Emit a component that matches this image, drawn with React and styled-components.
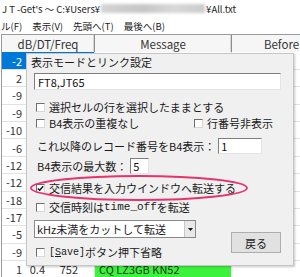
import React from "react";
import styled, { createGlobalStyle } from "styled-components";

const GlobalStyle = createGlobalStyle`
    html, body {
        margin: 0;
        padding: 0;
        background: #fff;
        overflow: hidden;
    }
    body {
        font-family: "Noto Sans CJK JP", "Noto Sans", sans-serif;
        color: #1e1e1e;
    }
`;

const rows = [
    { db: "-2", dt: "0.1", freq: "1520", msg: "JA1XYZ JH2ABC PM95", selected: true },
    { db: "2", dt: "0.3", freq: "984", msg: "CQ JR3QHB PM74" },
    { db: "-9", dt: "0.2", freq: "1240", msg: "JE1CKA RA3DNC R-12" },
    { db: "-9", dt: "0.1", freq: "633", msg: "CQ DX UA9OV MO06" },
    { db: "-10", dt: "0.5", freq: "1811", msg: "JA7QVI BG4GOV OM91" },
    { db: "-6", dt: "0.2", freq: "2104", msg: "CQ BH1MBR OM89" },
    { db: "-12", dt: "0.3", freq: "447", msg: "JH1GBZ YB2ECG 73" },
    { db: "-12", dt: "0.1", freq: "1663", msg: "CQ VK4CT QG62" },
    { db: "-18", dt: "0.6", freq: "2390", msg: "JA4FHE DU1IVT RR73" },
    { db: "-17", dt: "0.2", freq: "1092", msg: "CQ HL2DC PM37" },
    { db: "-5", dt: "0.4", freq: "1378", msg: "JF1LMA BV2AL -07" },
    { db: "-9", dt: "0.3", freq: "872", msg: "CQ UN7LAN MO52" },
    { db: "1", dt: "0.4", freq: "752", msg: "CQ LZ3GB KN52", cq: true },
];

const App = () => {
    return (
        <Window>
            <GlobalStyle />
            <TitleBar>
                J T -Get's ～ C:¥Users¥<Blur />¥All.txt
            </TitleBar>
            <MenuBar>
                <MenuItem>ル(F)</MenuItem>
                <MenuItem>表示(V)</MenuItem>
                <MenuItem>先頭へ(T)</MenuItem>
                <MenuItem>最後へ(B)</MenuItem>
            </MenuBar>
            <GridWrap>
                <Table>
                    <HeadCell>dB/DT/Freq</HeadCell>
                    <HeadCell>Message</HeadCell>
                    <HeadCell>Before</HeadCell>
                    {rows.map((r, i) => (
                        <React.Fragment key={i}>
                            <Cell selected={r.selected}>
                                <Num $w={20}>{r.db}</Num>
                                <Num $w={23}>{r.dt}</Num>
                                <Num $w={33}>{r.freq}</Num>
                            </Cell>
                            <MsgCell cq={r.cq}>{r.msg}</MsgCell>
                            <Cell />
                        </React.Fragment>
                    ))}
                </Table>

                <Dialog>
                    <GroupLabel>表示モードとリンク設定</GroupLabel>
                    <TextField readOnly value="FT8,JT65" />
                    <CheckRow $mt={10}>
                        <Box />
                        選択セルの行を選択したままとする
                    </CheckRow>
                    <CheckRow $mt={2}>
                        <CheckItem $w={158}>
                            <Box />
                            B4表示の重複なし
                        </CheckItem>
                        <CheckItem>
                            <Box />
                            行番号非表示
                        </CheckItem>
                    </CheckRow>
                    <FieldRow $mt={8}>
                        これ以降のレコード番号をB4表示：
                        <SmallField readOnly value="1" $w={44} />
                    </FieldRow>
                    <FieldRow $mt={4}>
                        B4表示の最大数：
                        <SmallField readOnly value="5" $w={19} />
                    </FieldRow>
                    <CheckRow $mt={7}>
                        <Box checked>
                            <svg width="7" height="7" viewBox="0 0 7 7">
                                <path d="M0.8 3.4 L2.7 5.3 L6.2 1.2" fill="none" stroke="#111" strokeWidth="1.4" />
                            </svg>
                        </Box>
                        交信結果を入力ウインドウへ転送する
                    </CheckRow>
                    <CheckRow $mt={5}>
                        <Box />
                        交信時刻は<Mono>time_off</Mono>を転送
                    </CheckRow>
                    <Footer>
                        <FooterLeft>
                            <Select>
                                <SelectText>kHz未満をカットして転送</SelectText>
                                <SelectArrow>
                                    <svg width="5" height="3" viewBox="0 0 5 3">
                                        <path d="M0 0 H5 L2.5 3 Z" fill="#111" />
                                    </svg>
                                </SelectArrow>
                            </Select>
                            <CheckRow $mt={7}>
                                <Box />
                                <Mono $size={10}>
                                    [<u>S</u>ave]
                                </Mono>
                                ボタン押下省略
                            </CheckRow>
                        </FooterLeft>
                        <Button>戻る</Button>
                    </Footer>

                    <Mark width="224" height="32" viewBox="0 0 224 32">
                        <ellipse cx="112" cy="16" rx="108" ry="12" fill="none" stroke="#e6336c" strokeWidth="1.8" />
                    </Mark>
                </Dialog>
            </GridWrap>
        </Window>
    );
};

const Window = styled.div`
    width: 300px;
    height: 277px;
    overflow: hidden;
    background: #fff;
`;

const TitleBar = styled.div`
    height: 17px;
    display: flex;
    align-items: center;
    padding-left: 2px;
    font-size: 9.5px;
    color: #222;
    white-space: nowrap;
`;

const Blur = styled.span`
    display: inline-block;
    width: 104px;
    height: 9px;
    margin: 0 1px;
    background: linear-gradient(90deg, #d4d4d4, #c6c6c6 40%, #d8d8d8 70%, #cbcbcb);
    filter: blur(1.5px);
`;

const MenuBar = styled.div`
    height: 17px;
    display: flex;
    align-items: center;
    gap: 8px;
    font-size: 9.5px;
    color: #222;
    white-space: nowrap;
`;

const MenuItem = styled.span`
    padding: 0 1px;
`;

const GridWrap = styled.div`
    position: relative;
    margin-left: 1px;
    border-top: 1px solid #9a9a9a;
    border-left: 1px solid #9a9a9a;
`;

const Table = styled.div`
    display: grid;
    grid-template-columns: 93px 137px 100px;
    grid-auto-rows: 17.4px;
    width: 330px;
`;

const HeadCell = styled.div`
    height: 18px;
    box-sizing: border-box;
    display: flex;
    align-items: center;
    justify-content: center;
    background: #f6f6f6;
    border-bottom: 1px solid #9a9a9a;
    border-right: 1px solid #8e8e8e;
    box-shadow: inset -1px 0 #d6d6d6;
    font-size: 11.5px;
    color: #333;
`;

const Cell = styled.div`
    display: flex;
    align-items: center;
    box-sizing: border-box;
    border-bottom: 1px solid #e2e2e2;
    border-right: 1px solid #e2e2e2;
    font-size: 11px;
    white-space: nowrap;
    background: ${props => (props.selected ? "#0078d7" : "#fff")};
    color: ${props => (props.selected ? "#fff" : "#333")};
`;

const MsgCell = styled(Cell)`
    padding-left: 4px;
    background: ${props => (props.cq ? "#3df23d" : "#fff")};
    color: #1c3a1c;
`;

const Num = styled.span`
    width: ${props => props.$w}px;
    text-align: right;
    flex: none;
`;

const Dialog = styled.div`
    position: absolute;
    left: 24px;
    top: 18px;
    width: 268px;
    height: 213px;
    box-sizing: border-box;
    padding: 1px 12px 0 7px;
    display: flex;
    flex-direction: column;
    background: #f0f0f0;
    border: 1px solid #c6c6c6;
    box-shadow: 1px 1px 2px rgba(0, 0, 0, 0.22);
    font-size: 11px;
    color: #1a1a1a;
    white-space: nowrap;
`;

const GroupLabel = styled.div`
    height: 15px;
    line-height: 15px;
    margin-left: -3px;
`;

const TextField = styled.input`
    display: block;
    margin: 3px 0 0;
    width: 247px;
    height: 17px;
    box-sizing: border-box;
    padding: 0 3px;
    border: 1px solid;
    border-color: #7e7e7e #e4e4e4 #e4e4e4 #7e7e7e;
    background: #fff;
    font-family: inherit;
    font-size: 11px;
    color: #111;
    outline: none;
`;

const CheckRow = styled.div`
    display: flex;
    align-items: center;
    height: 14px;
    margin-top: ${props => props.$mt}px;
    padding-left: 2px;
`;

const CheckItem = styled.span`
    display: flex;
    align-items: center;
    flex: none;
    width: ${props => (props.$w ? `${props.$w}px` : "auto")};
`;

const Box = styled.span`
    width: 9px;
    height: 9px;
    box-sizing: border-box;
    margin-right: 4px;
    flex: none;
    display: flex;
    align-items: center;
    justify-content: center;
    background: #fff;
    border: 1px solid;
    border-color: #6e6e6e #d8d8d8 #d8d8d8 #6e6e6e;
`;

const Mono = styled.span`
    font-family: "Liberation Mono", monospace;
    font-size: ${props => props.$size || 11}px;
    u {
        text-underline-offset: 1px;
    }
`;

const FieldRow = styled.div`
    display: flex;
    align-items: center;
    height: 16px;
    margin-top: ${props => props.$mt}px;
    padding-left: 3px;
`;

const SmallField = styled(TextField)`
    margin: 0 0 0 3px;
    width: ${props => props.$w}px;
    height: 16px;
    padding: 0 2px;
`;

const Footer = styled.div`
    display: flex;
    justify-content: space-between;
    align-items: flex-start;
    margin-top: 6px;
`;

const FooterLeft = styled.div`
    display: flex;
    flex-direction: column;
    width: 162px;
`;

const Select = styled.div`
    display: flex;
    height: 18px;
    box-sizing: border-box;
    border: 1px solid #8a8a8a;
    background: #fff;
`;

const SelectText = styled.span`
    flex: 1;
    display: flex;
    align-items: center;
    padding-left: 2px;
`;

const SelectArrow = styled.span`
    width: 10px;
    display: flex;
    align-items: center;
    justify-content: center;
    background: #e8e8e8;
    border-left: 1px solid #c8c8c8;
`;

const Button = styled.div`
    width: 50px;
    height: 21px;
    box-sizing: border-box;
    margin-top: 12px;
    display: flex;
    align-items: center;
    justify-content: center;
    background: #e1e1e1;
    border: 1px solid #adadad;
    font-size: 11px;
    color: #222;
`;

const Mark = styled.svg`
    position: absolute;
    left: 0;
    top: 118px;
    pointer-events: none;
`;

export default App;
